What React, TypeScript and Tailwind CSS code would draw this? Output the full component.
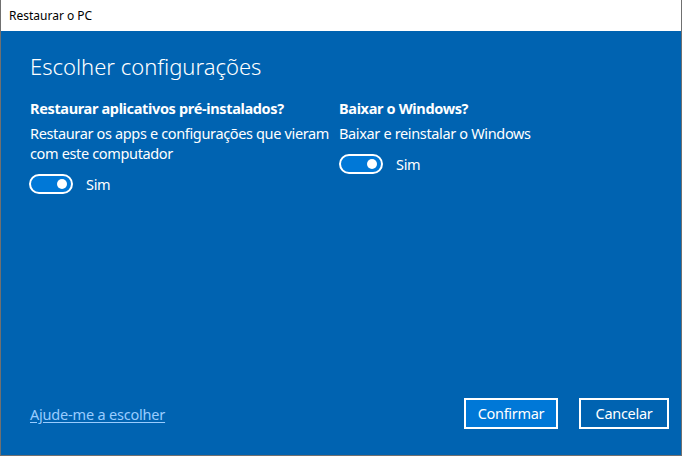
import React from "react";

function Toggle() {
  return (
    <div className="flex items-center gap-[13px]">
      <div className="w-[44px] h-[20px] rounded-full border-2 border-white bg-[#0078d7] flex items-center justify-end pr-[4px]">
        <div className="w-[10px] h-[10px] rounded-full bg-white" />
      </div>
      <span className="text-[14.5px] tracking-[-0.3px] leading-[20px]">Sim</span>
    </div>
  );
}

export default function App() {
  return (
    <div
      className="w-[682px] h-[456px] flex flex-col border-l border-r border-b border-[#707070] text-white"
      style={{ fontFamily: '"Noto Sans", "Open Sans", sans-serif' }}
    >
      <div className="h-[31px] bg-white text-black text-[12px] flex items-center pl-[8px] shrink-0">
        Restaurar o PC
      </div>
      <div className="flex-1 bg-[#0063b1] flex flex-col pl-[28px] pr-[12px] pt-[20px] pb-[26px]">
        <div className="text-[22px] font-light leading-[30px] pl-[1px]">Escolher configurações</div>
        <div className="flex mt-[17px] text-[14.5px] tracking-[-0.35px]">
          <div className="w-[310px] flex flex-col">
            <div className="font-bold leading-[20px] pl-[1px]">Restaurar aplicativos pré-instalados?</div>
            <div className="leading-[20px] mt-[5px] pr-[2px] pl-[1px]">
              Restaurar os apps e configurações que vieram com este computador
            </div>
            <div className="mt-[11px]">
              <Toggle />
            </div>
          </div>
          <div className="flex flex-col">
            <div className="font-bold leading-[20px]">Baixar o Windows?</div>
            <div className="leading-[20px] mt-[5px]">Baixar e reinstalar o Windows</div>
            <div className="mt-[11px]">
              <Toggle />
            </div>
          </div>
        </div>
        <div className="flex-1" />
        <div className="flex items-center">
          <a className="text-[14.5px] tracking-[-0.2px] text-[#99ccff] underline underline-offset-2 leading-[20px] pl-[1px]">
            Ajude-me a escolher
          </a>
          <div className="flex-1" />
          <button className="w-[94px] h-[31px] border-2 border-white bg-[#0078d7] text-[14.5px] tracking-[-0.3px] mr-[21px]">
            Confirmar
          </button>
          <button className="w-[90px] h-[31px] border-2 border-white bg-transparent text-[14.5px] tracking-[-0.3px]">
            Cancelar
          </button>
        </div>
      </div>
    </div>
  );
}
